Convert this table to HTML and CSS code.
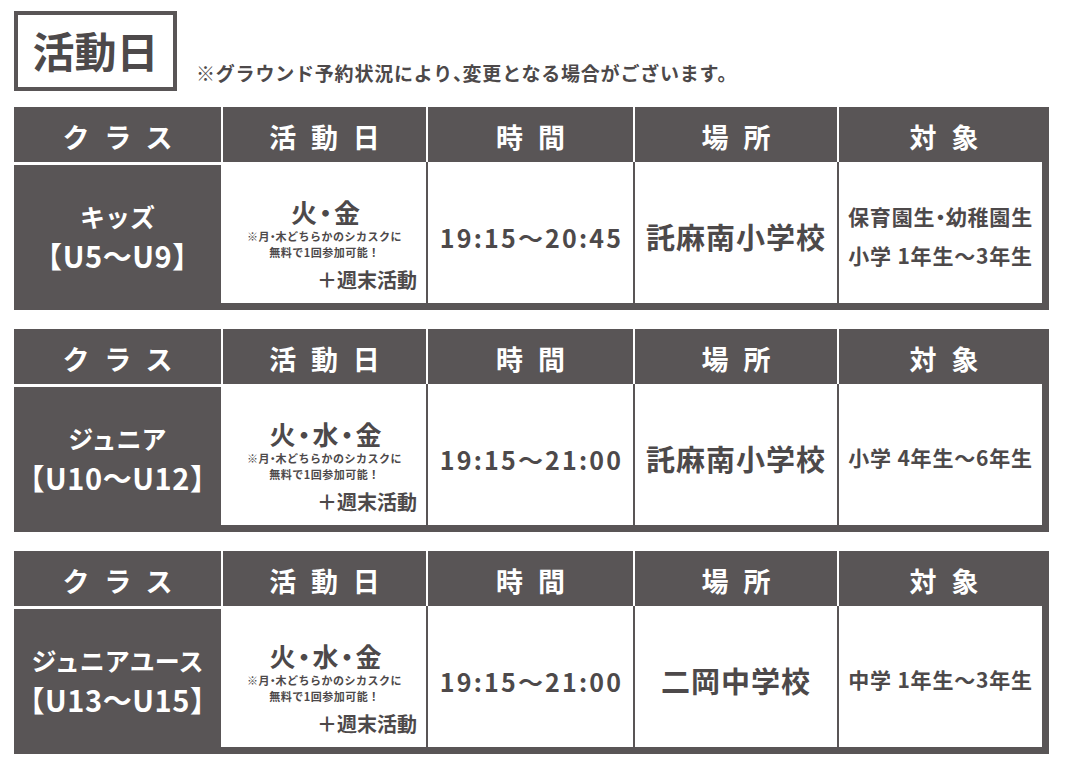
FILE: index.html
```html
<!DOCTYPE html>
<html lang="ja">
<head>
<meta charset="utf-8">
<title>活動日</title>
<link rel="stylesheet" href="styles.css">
</head>
<body>
<div class="page">
  <div class="title-row">
    <div class="title-box">活動日</div>
    <div class="title-note">※グラウンド予約状況により<span class="p">、</span>変更となる場合がございます。</div>
  </div>

  <section class="table">
    <div class="thead">
      <div class="th">クラス</div>
      <div class="th">活動日</div>
      <div class="th">時間</div>
      <div class="th">場所</div>
      <div class="th">対象</div>
    </div>
    <div class="tbody">
      <div class="cls"><span>キッズ</span><span class="age">【U5～U9】</span></div>
      <div class="cell day">
        <div class="days">火<span class="p">・</span>金</div>
        <div class="day-note"><span class="kome">※</span>月<span class="p">・</span>木どちらかのシカスクに<br>無料で1回参加可能！</div>
        <div class="weekend">＋週末活動</div>
      </div>
      <div class="cell time">19:15～20:45</div>
      <div class="cell place">託麻南小学校</div>
      <div class="cell target"><span>保育園生<span class="p">・</span>幼稚園生</span><span>小学 1年生～3年生</span></div>
    </div>
  </section>

  <section class="table">
    <div class="thead">
      <div class="th">クラス</div>
      <div class="th">活動日</div>
      <div class="th">時間</div>
      <div class="th">場所</div>
      <div class="th">対象</div>
    </div>
    <div class="tbody">
      <div class="cls"><span>ジュニア</span><span class="age">【U10～U12】</span></div>
      <div class="cell day">
        <div class="days">火<span class="p">・</span>水<span class="p">・</span>金</div>
        <div class="day-note"><span class="kome">※</span>月<span class="p">・</span>木どちらかのシカスクに<br>無料で1回参加可能！</div>
        <div class="weekend">＋週末活動</div>
      </div>
      <div class="cell time">19:15～21:00</div>
      <div class="cell place">託麻南小学校</div>
      <div class="cell target"><span>小学 4年生～6年生</span></div>
    </div>
  </section>

  <section class="table">
    <div class="thead">
      <div class="th">クラス</div>
      <div class="th">活動日</div>
      <div class="th">時間</div>
      <div class="th">場所</div>
      <div class="th">対象</div>
    </div>
    <div class="tbody">
      <div class="cls"><span>ジュニアユース</span><span class="age">【U13～U15】</span></div>
      <div class="cell day">
        <div class="days">火<span class="p">・</span>水<span class="p">・</span>金</div>
        <div class="day-note"><span class="kome">※</span>月<span class="p">・</span>木どちらかのシカスクに<br>無料で1回参加可能！</div>
        <div class="weekend">＋週末活動</div>
      </div>
      <div class="cell time">19:15～21:00</div>
      <div class="cell place">二岡中学校</div>
      <div class="cell target"><span>中学 1年生～3年生</span></div>
    </div>
  </section>
</div>
</body>
</html>
```

FILE: styles.css
```css
html, body {
  margin: 0;
  padding: 0;
  background: #ffffff;
}

body {
  font-family: "Noto Sans CJK JP", "Noto Sans", sans-serif;
  font-weight: 700;
  color: #4d494a;
}

.page {
  width: 1035px;
  padding: 11px 21px 0 14px;
}

.p {
  font-feature-settings: "palt" 1;
  letter-spacing: 0;
}

.title-row {
  display: flex;
  align-items: flex-end;
  height: 80px;
  margin-bottom: 16px;
}

.title-box {
  box-sizing: border-box;
  width: 163px;
  height: 80px;
  border: 4px solid #595556;
  display: flex;
  align-items: center;
  justify-content: center;
  font-size: 42px;
  line-height: 1;
  color: #4d494a;
  padding-bottom: 2px;
}

.title-note {
  margin-left: 19px;
  margin-bottom: 6px;
  font-size: 19px;
  line-height: 24px;
  letter-spacing: 0.8px;
  color: #4d494a;
}

.table {
  margin-bottom: 19px;
}

.thead,
.tbody {
  display: grid;
  grid-template-columns: 207px 203px 205px 202px 1fr;
  column-gap: 2px;
}

.thead {
  height: 55px;
}

.th {
  background: #595556;
  color: #ffffff;
  display: flex;
  align-items: center;
  justify-content: center;
  font-size: 27px;
  letter-spacing: 0.55em;
  padding-left: 0.55em;
  padding-top: 4px;
  box-sizing: border-box;
}

.tbody {
  background: #595556;
  padding-bottom: 7px;
  height: 148px;
  box-sizing: border-box;
}

.cls {
  background: #595556;
  border-top: 3px solid #ffffff;
  color: #ffffff;
  display: flex;
  flex-direction: column;
  align-items: center;
  justify-content: center;
  font-size: 25px;
  line-height: 39px;
  padding-top: 4px;
  box-sizing: border-box;
}

.cls .age {
  font-size: 29px;
  letter-spacing: 0.6px;
}

.cell {
  background: #ffffff;
  display: flex;
  align-items: center;
  justify-content: center;
}

.day {
  box-shadow: -2px 0 0 #ffffff;
  flex-direction: column;
  align-items: stretch;
  justify-content: flex-start;
}

.days {
  margin-top: 35px;
  font-size: 26px;
  line-height: 30px;
  text-align: center;
  padding-left: 2px;
}

.days .p {
  padding: 0 2px;
}

.day-note {
  margin-top: 1px;
  font-size: 11px;
  line-height: 16px;
  letter-spacing: 0.5px;
  text-align: center;
  color: #4d494a;
}

.kome {
  font-weight: 400;
}

.weekend {
  margin-top: 8px;
  font-size: 20px;
  line-height: 24px;
  text-align: right;
  padding-right: 9px;
}

.time {
  font-size: 25px;
  letter-spacing: 2.2px;
  padding-top: 8px;
  padding-left: 2px;
  box-sizing: border-box;
}

.place {
  font-size: 29px;
  letter-spacing: 1px;
  padding-top: 6px;
  box-sizing: border-box;
}

.target {
  margin-right: 7px;
  flex-direction: column;
  font-size: 21px;
  line-height: 39px;
  letter-spacing: 0.8px;
  padding-top: 6px;
  box-sizing: border-box;
}
```
